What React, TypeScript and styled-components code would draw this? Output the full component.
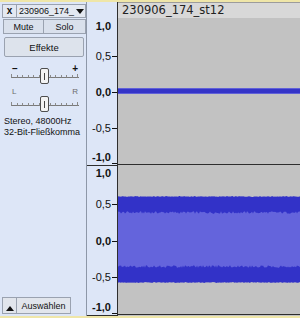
import React from 'react';
import styled, { createGlobalStyle } from 'styled-components';

const GlobalStyle = createGlobalStyle`
  html, body {
    margin: 0;
    padding: 0;
    background: #dde6f7;
  }
  body {
    font-family: "Liberation Sans", Arial, sans-serif;
  }
`;

const Track = styled.div`
  width: 300px;
  height: 318px;
  box-sizing: border-box;
  border-top: 2px solid #efe6a8;
  border-bottom: 2px solid #efe6a8;
  display: flex;
  overflow: hidden;
  background: #dde6f7;
`;

// ---- control panel ----
const Panel = styled.div`
  width: 87px;
  flex: none;
  box-sizing: border-box;
  border-right: 1px solid #8d97a8;
  display: flex;
  flex-direction: column;
  padding: 2px 0 2px 2px;
  font-size: 9px;
  color: #111;
`;

const TopRow = styled.div`
  display: flex;
  height: 14px;
`;

const SmallButton = styled.div`
  box-sizing: border-box;
  border: 1px solid #9aa2b0;
  background: #e3e8f1;
  display: flex;
  align-items: center;
  justify-content: center;
`;

const CloseButton = styled(SmallButton)`
  width: 15px;
  font-weight: bold;
  font-size: 10px;
  line-height: 1;
  padding-bottom: 1px;
`;

const NameButton = styled(SmallButton)`
  flex: 1;
  justify-content: space-between;
  padding: 0 1px 0 2px;
  border-left: none;
`;

const DownArrow = styled.span`
  width: 0;
  height: 0;
  border-left: 4px solid transparent;
  border-right: 4px solid transparent;
  border-top: 5px solid #111;
`;

const UpArrow = styled.span`
  width: 0;
  height: 0;
  border-left: 4px solid transparent;
  border-right: 4px solid transparent;
  border-bottom: 5px solid #111;
  margin-top: 6px;
`;

const ToggleRow = styled.div`
  display: flex;
  height: 15px;
  margin: 1px 0 0 1px;
`;

const ToggleButton = styled(SmallButton)<{ $w?: number }>`
  ${(p) => (p.$w ? `width: ${p.$w}px;` : 'flex: 1;')}
  background: #d9e0ec;
  & + & {
    border-left: none;
  }
`;

const EffectsButton = styled(SmallButton)`
  height: 20px;
  margin: 3px 2px 0 2px;
  border-radius: 2px;
  background: #dde3ec;
  font-size: 9.5px;
`;

const SliderBox = styled.div<{ $h: number; $mt: number }>`
  position: relative;
  height: ${(p) => p.$h}px;
  margin: ${(p) => p.$mt}px 7px 0 9px;
`;

const SliderLabels = styled.div<{ $muted?: boolean }>`
  display: flex;
  justify-content: space-between;
  line-height: 9px;
  font-size: ${(p) => (p.$muted ? 8 : 10)}px;
  font-weight: ${(p) => (p.$muted ? 'normal' : 'bold')};
  color: ${(p) => (p.$muted ? '#6c6c6c' : '#111')};
  padding: 0 1px 0 1px;
`;

const TickLine = styled.svg<{ $top: number }>`
  position: absolute;
  left: 0;
  top: ${(p) => p.$top - 4}px;
`;

const Thumb = styled.div<{ $top: number }>`
  position: absolute;
  left: 29px;
  top: ${(p) => p.$top}px;
  width: 9px;
  height: 16px;
  box-sizing: border-box;
  border: 1px solid #4e4e4e;
  border-radius: 2px;
  background: #f3f3f3;
  &::after {
    content: '';
    position: absolute;
    left: 3px;
    top: 4px;
    width: 1px;
    height: 7px;
    background: #444;
  }
`;

const Info = styled.div`
  margin: 3px 0 0 2px;
  line-height: 11px;
  font-size: 9px;
`;

const BottomRow = styled.div`
  display: flex;
  height: 17px;
  margin-top: auto;
`;

const ExpandButton = styled(SmallButton)`
  width: 15px;
  background: #e1e5ec;
`;

const SelectButton = styled(SmallButton)`
  width: 54px;
  border-left: none;
  background: #e1e5ec;
`;

// ---- vertical ruler ----
const Ruler = styled.div`
  width: 30px;
  flex: none;
  display: flex;
  flex-direction: column;
  font-size: 11px;
  color: #111;
`;

const RulerSpacer = styled.div`
  height: 17px;
`;

const RulerChannel = styled.div<{ $h: number }>`
  position: relative;
  height: ${(p) => p.$h}px;
`;

const RulerLabel = styled.div<{ $bold?: boolean; $pos: number; $anchor: 'top' | 'mid' | 'bottom' }>`
  position: absolute;
  right: 6px;
  line-height: 11px;
  font-weight: ${(p) => (p.$bold ? 'bold' : 'normal')};
  ${(p) =>
    p.$anchor === 'bottom' ? `bottom: ${p.$pos}px;` : `top: ${p.$pos}px;`}
  ${(p) => (p.$anchor === 'mid' ? 'transform: translateY(-50%);' : '')}
`;

const Tick = styled.div<{ $pos: number }>`
  position: absolute;
  right: 0;
  top: ${(p) => p.$pos}px;
  width: 5px;
  height: 1px;
  background: #111;
`;

const Divider = styled.div<{ $c: string }>`
  height: 1px;
  background: ${(p) => p.$c};
`;

// ---- wave area ----
const WaveArea = styled.div`
  flex: 1;
  display: flex;
  flex-direction: column;
  border-left: 1px solid #2e2e2e;
  background: #c2c2c2;
`;

const TitleBar = styled.div`
  height: 16px;
  box-sizing: border-box;
  border-top: 1px solid #9c9c9c;
  background: #d8d8d8;
  padding-left: 4px;
  font-family: "DejaVu Sans", Verdana, sans-serif;
  font-size: 11.5px;
  line-height: 15px;
  color: #222;
  white-space: nowrap;
`;

const Channel = styled.div<{ $h: number }>`
  height: ${(p) => p.$h}px;
  background: #c2c2c2;
`;

const W = 182;
const rand = (i: number) => {
  const s = Math.sin(i * 12.9898 + 78.233) * 43758.5453;
  return s - Math.floor(s);
};

function envelope(c: number, amp: number, jitter: number, seed: number) {
  const top: string[] = [];
  const bottom: string[] = [];
  for (let x = 0; x <= W; x++) {
    const a = amp + (rand(x + seed) - 0.5) * jitter;
    const b = amp + (rand(x + seed + 500) - 0.5) * jitter;
    top.push(`${x},${(c - a).toFixed(1)}`);
    bottom.unshift(`${x},${(c + b).toFixed(1)}`);
  }
  return `M${top.join(' L')} L${bottom.join(' L')} Z`;
}

const CH2 = 149;
const peakPath = envelope(74.5, 43, 0.8, 1);
const rmsPath = envelope(74.5, 27, 2.6, 40);

function RulerMarks({ h }: { h: number }) {
  const mid = h / 2;
  const q = (h - 2) / 4;
  return (
    <RulerChannel $h={h}>
      <RulerLabel $bold $anchor="top" $pos={2}>1,0</RulerLabel>
      <RulerLabel $anchor="mid" $pos={mid - q}>0,5</RulerLabel>
      <Tick $pos={Math.round(mid - q)} />
      <RulerLabel $bold $anchor="mid" $pos={mid}>0,0</RulerLabel>
      <Tick $pos={Math.round(mid)} />
      <RulerLabel $anchor="mid" $pos={mid + q}>-0,5</RulerLabel>
      <Tick $pos={Math.round(mid + q)} />
      <RulerLabel $bold $anchor="bottom" $pos={2}>-1,0</RulerLabel>
      <Tick $pos={h - 2} />
    </RulerChannel>
  );
}

function Slider({ left, right, h, mt, trackTop, thumbTop, muted }: {
  left: string; right: string; h: number; mt: number; trackTop: number; thumbTop: number; muted?: boolean;
}) {
  const ticks = Array.from({ length: 13 }, (_, i) => Math.round(i * 5.5) + 0.5);
  return (
    <SliderBox $h={h} $mt={mt}>
      <SliderLabels $muted={muted}>
        <span>{left}</span>
        <span>{right}</span>
      </SliderLabels>
      <TickLine $top={trackTop} width="68" height="6">
        <line x1="0" y1="4.5" x2="68" y2="4.5" stroke="#7a7a7a" />
        {ticks.map((x, i) => (
          <line key={i} x1={x} y1={i === 0 || i === 12 ? 1 : 2} x2={x} y2="4.5" stroke="#8a8a8a" />
        ))}
      </TickLine>
      <Thumb $top={thumbTop} />
    </SliderBox>
  );
}

export default function App() {
  return (
    <>
      <GlobalStyle />
      <Track>
        <Panel>
          <TopRow>
            <CloseButton>x</CloseButton>
            <NameButton>
              <span>230906_174_</span>
              <DownArrow />
            </NameButton>
          </TopRow>
          <ToggleRow>
            <ToggleButton $w={41}>Mute</ToggleButton>
            <ToggleButton>Solo</ToggleButton>
          </ToggleRow>
          <EffectsButton>Effekte</EffectsButton>
          <Slider left="–" right="+" h={22} mt={7} trackTop={13} thumbTop={4} />
          <Slider left="L" right="R" h={26} mt={1} trackTop={18} thumbTop={9} muted />
          <Info>
            Stereo, 48000Hz
            <br />
            32-Bit-Fließkomma
          </Info>
          <BottomRow>
            <ExpandButton>
              <UpArrow />
            </ExpandButton>
            <SelectButton>Auswählen</SelectButton>
          </BottomRow>
        </Panel>

        <Ruler>
          <RulerSpacer />
          <RulerMarks h={146} />
          <Divider $c="#2e2e2e" />
          <RulerMarks h={CH2} />
          <Divider $c="#2e2e2e" />
        </Ruler>

        <WaveArea>
          <TitleBar>230906_174_st12</TitleBar>
          <Channel $h={146}>
            <svg width={W} height={146}>
              <rect x="0" y="70" width={W} height="6" fill="#6060d8" />
              <rect x="0" y="71" width={W} height="4" fill="#3434c8" />
            </svg>
          </Channel>
          <Divider $c="#2e2e2e" />
          <Channel $h={CH2}>
            <svg width={W} height={CH2}>
              <path d={peakPath} fill="#3232c8" />
              <path d={rmsPath} fill="#6464dc" />
            </svg>
          </Channel>
          <Divider $c="#2e2e2e" />
        </WaveArea>
      </Track>
    </>
  );
}
